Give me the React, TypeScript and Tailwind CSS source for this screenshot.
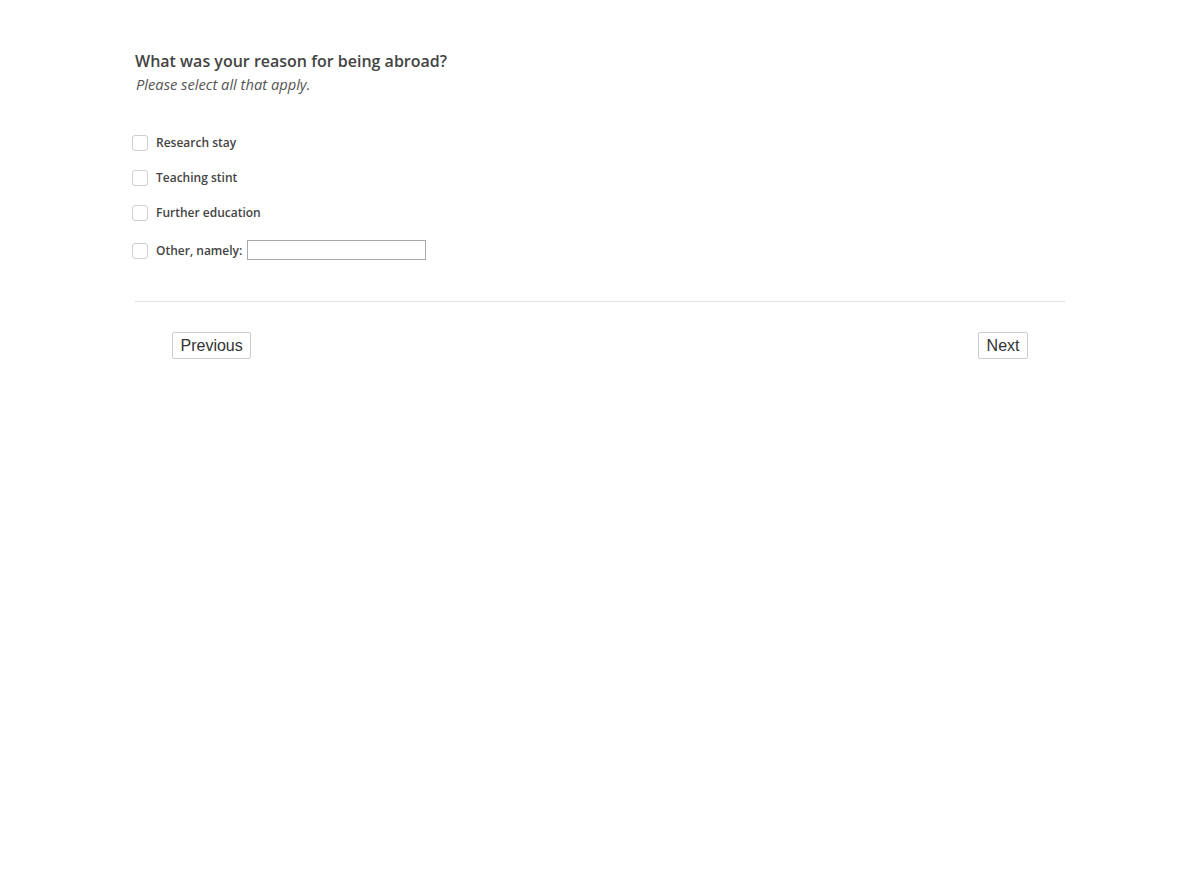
import { useState } from "react";

const options = [
  { id: "research", label: "Research stay" },
  { id: "teaching", label: "Teaching stint" },
  { id: "education", label: "Further education" }
];

function Box({ checked, onToggle }: { checked: boolean; onToggle: () => void }) {
  return (
    <button
      type="button"
      onClick={onToggle}
      className="grid h-4 w-4 shrink-0 place-items-center rounded-[3px] border border-[#cfcfcf] bg-white"
    >
      {checked && <span className="h-2 w-2 rounded-[1px] bg-[#555]" />}
    </button>
  );
}

export default function App() {
  const [picked, setPicked] = useState<Record<string, boolean>>({});
  const toggle = (id: string) => setPicked((p) => ({ ...p, [id]: !p[id] }));

  return (
    <div className="min-h-[882px] bg-white text-[#444] [font-family:'Open_Sans',sans-serif]">
      <div className="mx-auto w-[930px] pt-[50px]">
        <h2 className="text-[16px] font-semibold leading-[22px]">What was your reason for being abroad?</h2>
        <p className="mt-[2px] pl-[1px] text-[14.7px] italic leading-[20px] text-[#555]">Please select all that apply.</p>

        <div className="mt-[41px] flex flex-col gap-[19px] -ml-[3px]">
          {options.map((o) => (
            <label key={o.id} className="flex h-4 items-center gap-2 text-[12px] font-semibold">
              <Box checked={!!picked[o.id]} onToggle={() => toggle(o.id)} />
              <span>{o.label}</span>
            </label>
          ))}
          <label className="mt-[1px] flex h-5 items-center gap-2 text-[12px] font-semibold">
            <Box checked={!!picked.other} onToggle={() => toggle("other")} />
            <span>Other, namely:</span>
            <input
              type="text"
              className="-ml-[3px] -mt-[2px] h-5 w-[179px] border border-[#aaa] px-1 text-[12px] outline-none"
            />
          </label>
        </div>

        <hr className="mt-[40px] border-t border-[#e0e0e0]" />

        <div className="flex justify-between px-[37px] pt-[30px] [font-family:'Liberation_Sans',Arial,sans-serif]">
          <button type="button" className="h-[27px] rounded-[2px] border border-[#ccc] bg-white px-[7.5px] text-[16px] text-[#333]">
            Previous
          </button>
          <button type="button" className="h-[27px] rounded-[2px] border border-[#ccc] bg-white px-[7.5px] text-[16px] text-[#333]">
            Next
          </button>
        </div>
      </div>
    </div>
  );
}
